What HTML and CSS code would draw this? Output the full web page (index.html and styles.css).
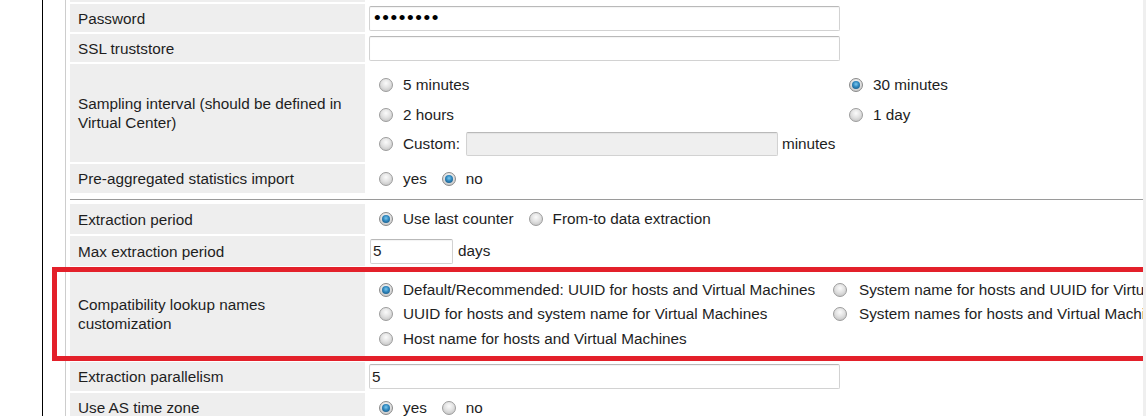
FILE: index.html
```html
<!DOCTYPE html>
<html>
<head>
<meta charset="utf-8">
<link rel="stylesheet" href="styles.css">
</head>
<body>
<div class="page">
  <div class="panel">
    <div class="form">
      <div class="row stub"><div class="lbl"></div><div class="val"></div></div>

      <div class="row h28">
        <div class="lbl">Password</div>
        <div class="val"><input class="field wide pw" type="password" value="password"></div>
      </div>

      <div class="row h28">
        <div class="lbl">SSL truststore</div>
        <div class="val"><input class="field wide" type="text" value=""></div>
      </div>

      <div class="row h98">
        <div class="lbl">Sampling interval (should be defined in Virtual Center)</div>
        <div class="val opts">
          <div class="sgrid">
            <label class="opt"><span class="radio"></span>5 minutes</label>
            <label class="opt"><span class="radio on"></span>30 minutes</label>
            <label class="opt"><span class="radio"></span>2 hours</label>
            <label class="opt"><span class="radio"></span>1 day</label>
            <label class="opt custom"><span class="radio"></span>Custom:<input class="field cust" type="text" value="" disabled><span class="unit">minutes</span></label>
          </div>
        </div>
      </div>

      <div class="row h29">
        <div class="lbl">Pre-aggregated statistics import</div>
        <div class="val opts inline">
          <label class="opt"><span class="radio"></span>yes</label>
          <label class="opt"><span class="radio on"></span>no</label>
        </div>
      </div>

      <div class="sep"></div>

      <div class="row h30">
        <div class="lbl">Extraction period</div>
        <div class="val opts inline">
          <label class="opt"><span class="radio on"></span>Use last counter</label>
          <label class="opt"><span class="radio"></span>From-to data extraction</label>
        </div>
      </div>

      <div class="row h30">
        <div class="lbl">Max extraction period</div>
        <div class="val"><input class="field short" type="text" value="5"><span class="unit days">days</span></div>
      </div>

      <div class="row h92 marked">
        <div class="lbl">Compatibility lookup names customization</div>
        <div class="val opts">
          <div class="cgrid">
            <label class="opt"><span class="radio on"></span>Default/Recommended: UUID for hosts and Virtual Machines</label>
            <label class="opt col2"><span class="radio"></span>System name for hosts and UUID for Virtual Machines</label>
            <label class="opt"><span class="radio"></span>UUID for hosts and system name for Virtual Machines</label>
            <label class="opt col2"><span class="radio"></span>System names for hosts and Virtual Machines</label>
            <label class="opt"><span class="radio"></span>Host name for hosts and Virtual Machines</label>
          </div>
        </div>
        <div class="highlight"></div>
      </div>

      <div class="row h29">
        <div class="lbl">Extraction parallelism</div>
        <div class="val"><input class="field wide" type="text" value="5"></div>
      </div>

      <div class="row h29">
        <div class="lbl">Use AS time zone</div>
        <div class="val opts inline">
          <label class="opt"><span class="radio on"></span>yes</label>
          <label class="opt"><span class="radio"></span>no</label>
        </div>
      </div>
    </div>
  </div>
</div>
</body>
</html>
```

FILE: styles.css
```css
html, body {
  margin: 0;
  padding: 0;
  background: #fff;
}
body {
  font-family: "Liberation Sans", Arial, sans-serif;
  font-size: 15.3px;
  color: #1e1e1e;
}
.page {
  display: flex;
  height: 416px;
  overflow: hidden;
}
.panel {
  margin-left: 42px;
  width: 1100px;
  height: 416px;
  border-left: 1px solid #000;
  border-right: 3px solid #efefef;
  overflow: hidden;
}
.form {
  margin-left: 22px;
  border-left: 1px solid #cdcdcd;
  padding-left: 4px;
  height: 100%;
  display: flex;
  flex-direction: column;
  gap: 2px;
}
.row {
  display: grid;
  grid-template-columns: 295px minmax(0, 1fr);
  column-gap: 3px;
  flex: none;
}
.stub { height: 2px; }
.h28 { height: 28px; }
.h29 { height: 29px; }
.h30 { height: 30px; }
.h92 { height: 92px; }
.h98 { height: 98px; }
.lbl {
  background: #eeeeee;
  padding: 0 8px;
  display: flex;
  align-items: center;
  line-height: 19px;
}
.val {
  display: flex;
  align-items: center;
  padding-left: 1px;
  white-space: nowrap;
}
.opts {
  padding-left: 11px;
}
.field {
  box-sizing: border-box;
  height: 25px;
  border: 1px solid #d2d2d2;
  border-top-color: #b9b9b9;
  border-radius: 2px;
  box-shadow: inset 0 1px 1px rgba(0, 0, 0, 0.05);
  background: #fff;
  font-family: "Liberation Sans", Arial, sans-serif;
  font-size: 15.3px;
  color: #1e1e1e;
  padding: 0 2px;
  margin: 0;
  outline: none;
}
.wide { width: 471px; }
.pw { padding-left: 4px; letter-spacing: 1.6px; font-size: 19px; color: #000; }
.short { width: 83px; margin-left: 1px; }
.cust {
  width: 312px;
  height: 24px;
  background: #efefef;
  margin-left: 6px;
}
.unit { margin-left: 4px; }
.days { margin-left: 5px; }
.opt {
  display: flex;
  align-items: center;
  white-space: nowrap;
}
.inline .opt { margin-right: 15px; }
.radio {
  flex: none;
  box-sizing: border-box;
  width: 14px;
  height: 14px;
  border-radius: 50%;
  border: 1px solid #9c9c9c;
  background: radial-gradient(circle at 50% 35%, #fbfbfb 0%, #e2e2e2 45%, #bababa 100%);
  margin-right: 10px;
  position: relative;
}
.radio.on {
  border-color: #8a8a8a;
}
.radio.on::after {
  content: "";
  position: absolute;
  left: 2px;
  top: 2px;
  width: 8px;
  height: 8px;
  border-radius: 50%;
  background: radial-gradient(circle at 50% 40%, #7cc9ef 0%, #2f86bd 45%, #124a72 100%);
}
.sgrid {
  display: grid;
  grid-template-columns: 470px auto;
  grid-auto-rows: 29.5px;
  align-items: center;
  padding-top: 3px;
}
.custom { grid-column: 1; }
.cgrid {
  display: grid;
  grid-template-columns: 453px auto;
  grid-auto-rows: 24.5px;
  align-items: center;
}
.col2 .radio { margin-right: 12px; margin-left: 1px; }
.sep {
  flex: none;
  height: 1px;
  background: #9a9a9a;
  margin: 4px 0 2px 0;
}
.marked { position: relative; }
.highlight {
  position: absolute;
  left: -18px;
  top: -1px;
  bottom: -1px;
  right: -30px;
  border: 5px solid #e3202a;
  pointer-events: none;
}
```
